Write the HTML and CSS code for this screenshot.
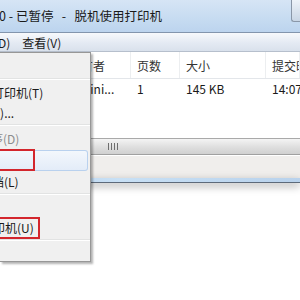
FILE: index.html
```html
<!DOCTYPE html>
<html lang="zh-CN">
<head>
    <meta charset="UTF-8">
    <title>脱机使用打印机</title>
    <link rel="stylesheet" href="styles.css">
</head>
<body>
    <div class="window">
        <!-- Titelleiste -->
        <div class="titlebar">
            <span class="title">0 - 已暂停&nbsp;&nbsp; - &nbsp;&nbsp;脱机使用打印机</span>
            <span class="win-button"></span>
        </div>

        <!-- Menüleiste -->
        <div class="menubar">
            <span class="menu-item cut">D)</span>
            <span class="menu-item">查看(V)</span>
        </div>

        <!-- Druckauftragsliste -->
        <div class="queue">
            <div class="list-head">
                <span class="col col-name">所有者</span>
                <span class="col col-pages">页数</span>
                <span class="col col-size">大小</span>
                <span class="col col-time">提交时间</span>
            </div>
            <div class="list-row">
                <span class="col col-name">admini...</span>
                <span class="col col-pages">1</span>
                <span class="col col-size">145 KB</span>
                <span class="col col-time">14:07</span>
            </div>
            <div class="list-space"></div>
            <div class="hscroll">
                <span class="grip"></span>
            </div>
            <div class="statusbar"></div>
            <div class="frame-bottom"></div>
        </div>
    </div>

    <!-- Aufgeklapptes Menü "打印机" -->
    <div class="dropdown">
        <div class="dd-item"></div>
        <div class="dd-sep"></div>
        <div class="dd-item"><span class="dd-text t1">设置为默认打印机(T)</span></div>
        <div class="dd-item"><span class="dd-text t2">打印首选项(E)...</span></div>
        <div class="dd-sep"></div>
        <div class="dd-item disabled"><span class="dd-text t3">更新驱动程序(D)</span></div>
        <div class="dd-item hover"><span class="mark mark-a"></span></div>
        <div class="dd-item"><span class="dd-text t4">取消所有文档(L)</span></div>
        <div class="dd-sep"></div>
        <div class="dd-item"></div>
        <div class="dd-item"><span class="dd-text t5">脱机使用打印机(U)</span><span class="mark mark-b"></span></div>
        <div class="dd-sep"></div>
        <div class="dd-item"></div>
    </div>
</body>
</html>
```

FILE: styles.css
```css
body {
    margin: 0;
    width: 300px;
    height: 300px;
    overflow: hidden;
    position: relative;
    background: #ffffff;
    font-family: "Noto Sans CJK SC", "DejaVu Sans", sans-serif;
    font-size: 12px;
    color: #1a1a1a;
}

.titlebar {
    height: 32px;
    display: flex;
    align-items: center;
    background: linear-gradient(#d6e5f5, #c6dbf1 60%, #bcd4ee);
    border-bottom: 1px solid #8395ad;
}

.title {
    font-size: 12.5px;
    margin-left: -1px;
    padding-bottom: 2px;
    white-space: nowrap;
}

.win-button {
    margin-left: auto;
    align-self: flex-start;
    width: 8px;
    height: 21px;
    border: 1px solid #8a97a8;
    border-right: none;
    border-top: none;
    border-radius: 0 0 0 3px;
    background: linear-gradient(#eef3f9, #c9d6e5);
}

.menubar {
    height: 18px;
    display: flex;
    align-items: center;
    gap: 12px;
    background: linear-gradient(#f7f9fc, #e4eaf3 55%, #d9e1ec);
    border-bottom: 1px solid #b6bfcc;
}

.menu-item {
    white-space: nowrap;
}

.menu-item.cut {
    margin-left: -2px;
}

.queue {
    display: flex;
    flex-direction: column;
}

.list-head,
.list-row {
    display: grid;
    grid-template-columns: 131px 49px 86px 1fr;
    white-space: nowrap;
}

.list-head {
    height: 26px;
    align-items: center;
    border-bottom: 1px solid #e3e6ea;
    color: #333;
}

.list-head .col {
    border-right: 1px solid #eceef0;
    height: 100%;
    display: flex;
    align-items: center;
}

.list-row {
    height: 18px;
    align-items: center;
}

.col {
    padding-left: 6px;
    overflow: hidden;
}

.list-head .col-name {
    padding-left: 69px;
}

.list-row .col-name {
    padding-left: 65px;
}

.list-space {
    height: 41px;
}

.hscroll {
    height: 15px;
    border-top: 1px solid #a9a9a9;
    border-bottom: 1px solid #a0a0a0;
    background: linear-gradient(#f4f4f4, #e0e0e0 50%, #d0d0d0);
    display: flex;
    align-items: center;
}

.grip {
    margin-left: 108px;
    width: 10px;
    height: 7px;
    background: repeating-linear-gradient(90deg, #6e6e6e 0 1px, transparent 1px 3px);
}

.statusbar {
    height: 22px;
    background: #f0eeec;
    border-top: 1px solid #ffffff;
}

.frame-bottom {
    height: 4px;
    background: linear-gradient(90deg, #b7d0ec, #c8e0f5 40%, #b9d2ec);
    border-bottom: 1px solid #5d6a7a;
    box-shadow: 0 3px 8px rgba(0, 0, 0, 0.35);
}

/* Dropdown-Menü */
.dropdown {
    position: absolute;
    top: 52px;
    left: 0;
    width: 91px;
    height: 210px;
    background: #f0f0f0;
    border: 1px solid #979797;
    border-left: none;
    box-shadow: 2px 2px 2px rgba(0, 0, 0, 0.3);
    display: flex;
    flex-direction: column;
    padding-top: 3px;
    box-sizing: border-box;
    overflow: hidden;
}

.dd-item {
    height: 20px;
    flex-shrink: 0;
    position: relative;
    display: flex;
    align-items: center;
    white-space: nowrap;
}

.dd-sep {
    height: 1px;
    flex-shrink: 0;
    margin: 2px 0;
    background: #e2e3e3;
    border-bottom: 1px solid #ffffff;
}

.dd-text {
    display: block;
}

.t1 { margin-left: -68px; }
.t2 { margin-left: -71px; }
.t3 { margin-left: -69px; }
.t4 { margin-left: -68px; }
.t5 { margin-left: -67px; }

.dd-item.disabled {
    color: #8d8d8d;
}

.dd-item.hover {
    height: 21px;
    margin-top: 2px;
    background: linear-gradient(#f3f7fc, #e3ecf8);
    border: 1px solid #b9d1ee;
    border-left: none;
    border-radius: 0 3px 3px 0;
    margin-right: 2px;
    box-sizing: border-box;
    overflow: visible;
}

.mark {
    position: absolute;
    left: -3px;
    border: 2px solid #d3262d;
    box-sizing: border-box;
}

.mark-a {
    top: -2px;
    width: 38px;
    height: 22px;
}

.mark-b {
    top: 0;
    width: 43px;
    height: 22px;
}
```
